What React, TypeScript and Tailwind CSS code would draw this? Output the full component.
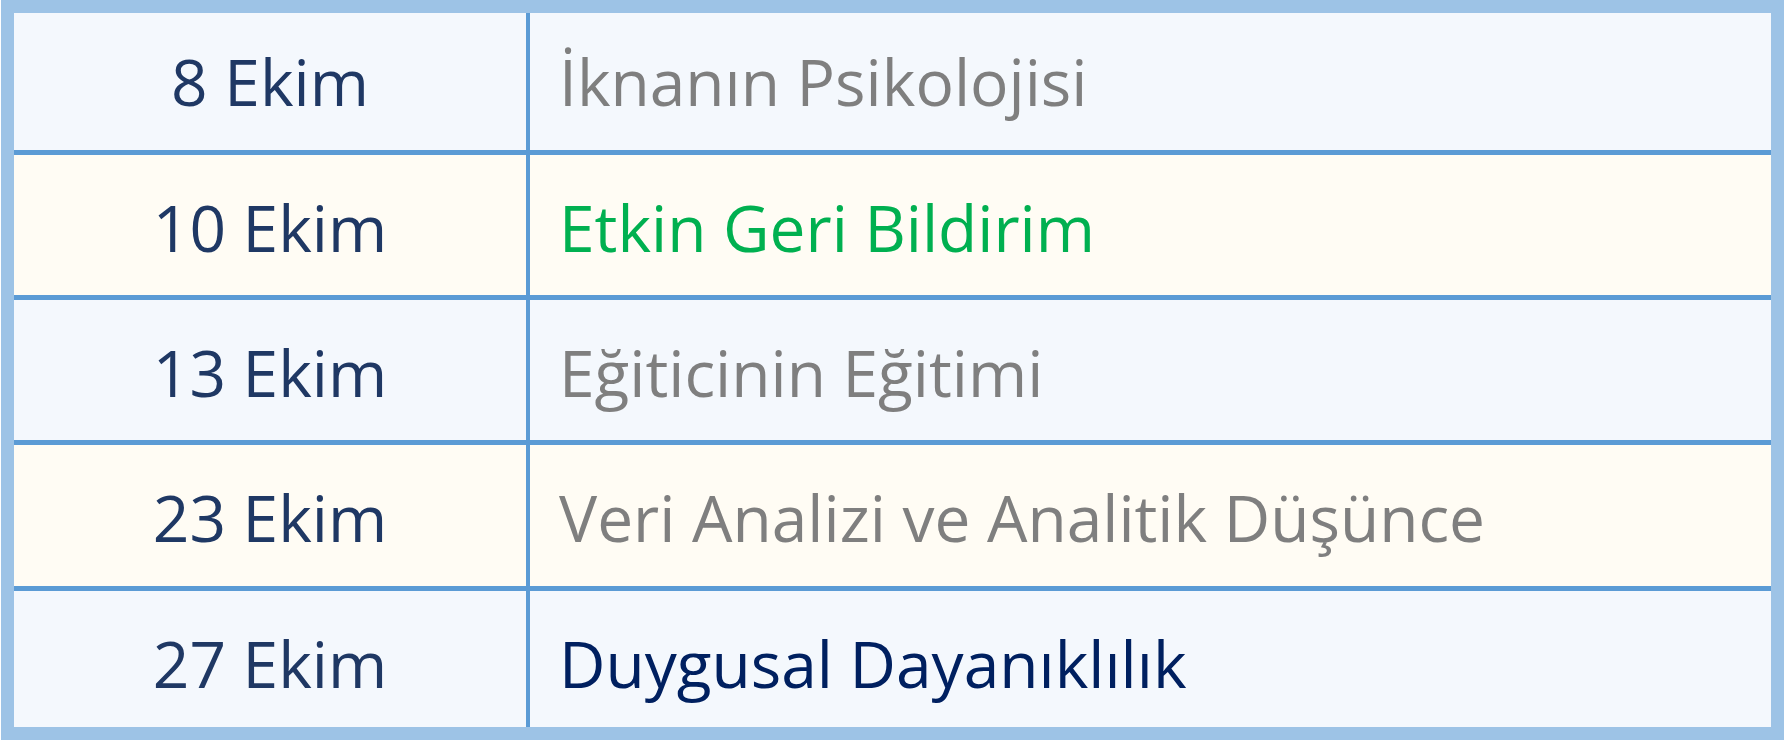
const rows = [
  { date: '8 Ekim', title: 'İknanın Psikolojisi', color: 'text-[#7f7f7f]', bg: 'bg-[#f4f8fd]', box: 'h-[137px] pt-[31px]' },
  { date: '10 Ekim', title: 'Etkin Geri Bildirim', color: 'text-[#00b050]', bg: 'bg-[#fffcf4]', box: 'h-[140px] pt-[35px]' },
  { date: '13 Ekim', title: 'Eğiticinin Eğitimi', color: 'text-[#7f7f7f]', bg: 'bg-[#f4f8fd]', box: 'h-[140px] pt-[35px]' },
  { date: '23 Ekim', title: 'Veri Analizi ve Analitik Düşünce', color: 'text-[#7f7f7f]', bg: 'bg-[#fffcf4]', box: 'h-[141px] pt-[35px]' },
  { date: '27 Ekim', title: 'Duygusal Dayanıklılık', color: 'text-[#002060]', bg: 'bg-[#f4f8fd]', box: 'h-[136px] pt-[35px]' },
];

export default function App() {
  return (
    <div className="min-h-screen bg-white">
      {/* program table */}
      <div className="ml-px flex w-[1783px] flex-col gap-[5px] border-[13px] border-[#9dc3e6] bg-[#5b9bd5] font-['Open_Sans',sans-serif] text-[64px] leading-[1.2] [font-variant-ligatures:none]">
        {rows.map((r) => (
          <div key={r.date} className="grid grid-cols-[512px_1fr] gap-x-[4px]">
            <div className={`text-center text-[#1f3864] ${r.bg} ${r.box}`}>{r.date}</div>
            <div className={`pl-[29px] ${r.bg} ${r.color} ${r.box}`}>{r.title}</div>
          </div>
        ))}
      </div>
    </div>
  );
}
